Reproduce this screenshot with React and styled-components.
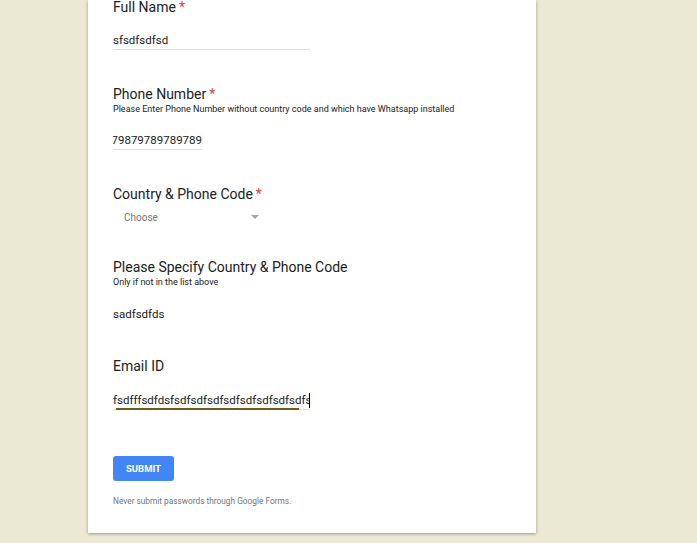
import styled, { createGlobalStyle } from 'styled-components';

const Global = createGlobalStyle`
  html, body {
    margin: 0;
    padding: 0;
    background: #ebe8d4;
    font-family: Roboto, "Liberation Sans", Arial, sans-serif;
  }
`;

const Page = styled.div`
  padding-left: 88px;
  min-height: 543px;
`;

const Card = styled.div`
  width: 448px;
  box-sizing: border-box;
  background: #fff;
  padding: 0 24px 26px 25px;
  box-shadow: 0 1px 3px rgba(0, 0, 0, 0.35);
`;

const Question = styled.div`
  margin-top: ${p => p.$gap || 0}px;
`;

const Label = styled.div`
  font-size: 14px;
  line-height: 14px;
  color: #212121;
`;

const Star = styled.span`
  color: #db4437;
  margin-left: 3px;
`;

const Help = styled.div`
  margin-top: 2px;
  font-size: 9px;
  line-height: 12px;
  color: #212121;
`;

const Input = styled.div`
  position: relative;
  margin-top: ${p => p.$gap}px;
  width: ${p => p.$width}px;
  height: 17px;
  padding-top: 2px;
  line-height: 17px;
  font-size: 11.5px;
  color: #212121;
  display: flex;
  border-bottom: 1px solid ${p => (p.$bare ? 'transparent' : '#e0e0e0')};
`;

const Clip = styled.div`
  overflow: hidden;
  white-space: nowrap;
  display: flex;
  justify-content: ${p => (p.$end ? 'flex-end' : 'flex-start')};
  flex: 1;
`;

const Caret = styled.span`
  width: 0;
  height: 15px;
  border-left: 1px solid #000;
  align-self: center;
  margin-left: 0;
`;

const Focus = styled.div`
  position: absolute;
  left: 3px;
  width: 183px;
  bottom: -1px;
  height: 2px;
  background: #6f5c1d;
`;

const Select = styled.div`
  margin-top: 4px;
  width: 154px;
  height: 24px;
  box-sizing: border-box;
  padding: 0 8px 0 11px;
  display: flex;
  align-items: center;
  justify-content: space-between;
  font-size: 10px;
  color: #757575;
`;

const Arrow = styled.span`
  width: 0;
  height: 0;
  border-left: 4px solid transparent;
  border-right: 4px solid transparent;
  border-top: 4px solid #a5a5a5;
`;

const Button = styled.button`
  margin-top: 46px;
  width: 61px;
  height: 25px;
  border: 0;
  border-radius: 3px;
  background: #4285f4;
  color: #fff;
  font-family: inherit;
  font-size: 9.5px;
  font-weight: 700;
  padding: 0;
  cursor: pointer;
  display: block;
`;

const Note = styled.div`
  margin-top: 14px;
  font-size: 8.3px;
  line-height: 12px;
  color: #6f7680;
`;

export default function App() {
  return (
    <>
      <Global />
      <Page>
        <Card>
          <Question>
            <Label>Full Name<Star>*</Star></Label>
            <Input $gap={16} $width={197}>
              <Clip>sfsdfsdfsd</Clip>
            </Input>
          </Question>

          <Question $gap={37}>
            <Label>Phone Number<Star>*</Star></Label>
            <Help>Please Enter Phone Number without country code and which have Whatsapp installed</Help>
            <Input $gap={15} $width={89}>
              <Clip $end>7979879789789789</Clip>
            </Input>
          </Question>

          <Question $gap={37}>
            <Label>Country &amp; Phone Code<Star>*</Star></Label>
            <Select>
              <span>Choose</span>
              <Arrow />
            </Select>
          </Question>

          <Question $gap={31}>
            <Label>Please Specify Country &amp; Phone Code</Label>
            <Help>Only if not in the list above</Help>
            <Input $gap={16} $width={197} $bare>
              <Clip>sadfsdfds</Clip>
            </Input>
          </Question>

          <Question $gap={35}>
            <Label>Email ID</Label>
            <Input $gap={17} $width={197}>
              <Clip>fsdfffsdfdsfsdfsdfsdfsdfsdfsdfsdfsdfsdfsdfsdfsdfsd</Clip>
              <Caret />
              <Focus />
            </Input>
          </Question>

          <Button>SUBMIT</Button>
          <Note>Never submit passwords through Google Forms.</Note>
        </Card>
      </Page>
    </>
  );
}
